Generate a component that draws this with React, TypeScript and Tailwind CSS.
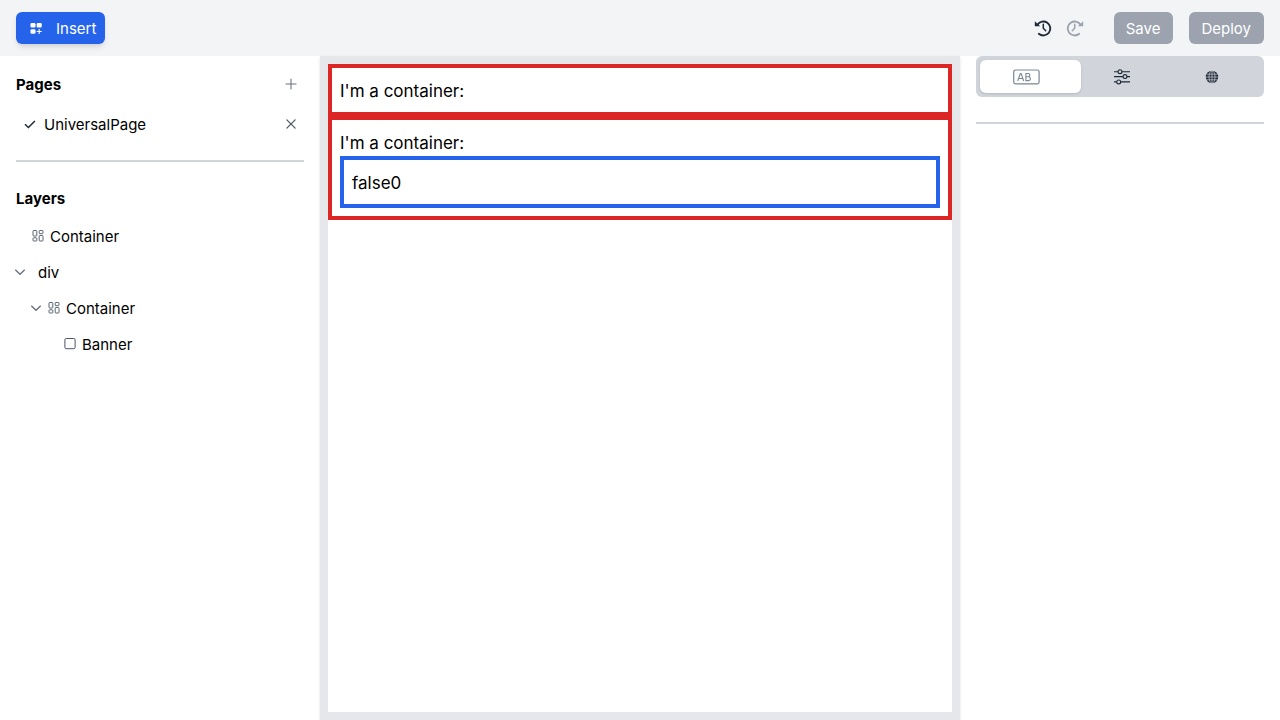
import type { ReactNode } from "react";
import { RxCross2, RxPlus } from "react-icons/rx";

function GridAddIcon() {
  return (
    <svg viewBox="0 0 16 16" className="size-4" fill="currentColor" aria-hidden="true">
      <rect x="2.500" y="3" width="5" height="4.500" rx="1.200" />
      <rect x="8.700" y="3" width="5" height="4.500" rx="1.200" />
      <rect x="2.500" y="9.200" width="5" height="4.600" rx="1.200" />
      <path d="M11.200 9v5M8.700 11.500h5" stroke="currentColor" strokeWidth="1.100" />
    </svg>
  );
}

function HistoryIcon({ flipped }: { flipped?: boolean }) {
  return (
    <svg
      viewBox="0 0 18 18"
      className={flipped ? "size-[18px] -scale-x-100" : "size-[18px]"}
      fill="none"
      stroke="currentColor"
      aria-hidden="true"
    >
      <path d="M3.400 5.700A7 7 0 1 1 4.800 14.800" strokeWidth="1.900" strokeLinecap="round" />
      <path d="M.8 2.300v5h5.400z" fill="currentColor" stroke="none" />
      <path d="M9.300 5.300v3.900l2.400 2.600" strokeWidth="1.500" strokeLinecap="round" />
    </svg>
  );
}

function DashboardIcon() {
  return (
    <svg viewBox="0 0 12 12" className="size-3" fill="none" stroke="currentColor" strokeWidth="0.900" aria-hidden="true">
      <rect x="1" y="0.500" width="3.800" height="5.500" rx="0.700" />
      <rect x="7.200" y="0.500" width="3.800" height="3.200" rx="0.700" />
      <rect x="1" y="7.800" width="3.800" height="3.200" rx="0.700" />
      <rect x="7.200" y="5.500" width="3.800" height="5.500" rx="0.700" />
    </svg>
  );
}

function BoxIcon() {
  return (
    <svg viewBox="0 0 12 12" className="size-3" fill="none" stroke="currentColor" aria-hidden="true">
      <rect x="0.900" y="0.500" width="10.200" height="10.200" rx="1.300" />
    </svg>
  );
}

function ChevronIcon() {
  return (
    <svg viewBox="0 0 16 16" className="size-4" fill="none" stroke="currentColor" strokeWidth="1.400" aria-hidden="true">
      <path d="M3.300 5.700 8 10.300l4.700-4.600" />
    </svg>
  );
}

function CheckIcon() {
  return (
    <svg viewBox="0 0 16 16" className="size-4" fill="none" stroke="currentColor" strokeWidth="1.500" aria-hidden="true">
      <path d="m3 8.200 3.400 3.300L12.900 5" />
    </svg>
  );
}

function TextFieldIcon() {
  return (
    <svg viewBox="0 0 27 16" className="h-4 w-[27px]" fill="none" stroke="currentColor" aria-hidden="true">
      <rect x="0.700" y="1" width="25.400" height="13.900" rx="1.800" strokeWidth="1.200" />
      <path d="M4.700 12 7.300 4.500h.8L10.700 12M5.600 9.500h4.200M12.900 4.500v7.100h2.600a1.900 1.900 0 0 0 0-3.800h-2.600h2.300a1.600 1.600 0 0 0 0-3.300z" strokeWidth="1.100" />
    </svg>
  );
}

function SlidersIcon() {
  return (
    <svg viewBox="0 0 16 16" className="size-4" fill="none" stroke="currentColor" strokeWidth="1.100" aria-hidden="true">
      <path d="M0 2.700h4M8 2.700h8M0 7.600h9M13 7.600h3M0 12.900h2.700M6.800 12.900H16" />
      <circle cx="6" cy="2.700" r="1.950" />
      <circle cx="11" cy="7.600" r="1.950" />
      <circle cx="4.700" cy="12.900" r="1.950" />
    </svg>
  );
}

function GlobeIcon() {
  return (
    <svg viewBox="0 0 14 14" className="size-3.5" fill="none" aria-hidden="true">
      <circle cx="7" cy="7" r="6.200" fill="currentColor" />
      <g stroke="#d1d5db" strokeWidth="0.700">
        <path d="M7 0.800v12.400M0.800 7h12.400M1.600 4.200h10.800M1.600 9.800h10.800" />
        <ellipse cx="7" cy="7" rx="3" ry="6.200" />
      </g>
    </svg>
  );
}

function Layer({
  label,
  icon,
  open,
  indent,
}: {
  label: string;
  icon?: ReactNode;
  open?: boolean;
  indent: string;
}) {
  return (
    <li className={`flex h-9 items-center ${indent}`}>
      {open && (
        <button type="button" aria-label={`Collapse ${label}`} className="mr-1 text-gray-500">
          <ChevronIcon />
        </button>
      )}
      {icon && <span className="mr-1 text-gray-600">{icon}</span>}
      <span className={icon ? "ml-0.5 pt-0.5" : "ml-1.5 pt-0.5"}>{label}</span>
    </li>
  );
}

export default function App() {
  return (
    <div className="flex min-h-screen flex-col bg-white font-['Inter',sans-serif] text-[15px] leading-6 text-black">
      <header className="flex h-14 items-center bg-[#f3f4f6] px-4">
        <button
          type="button"
          className="flex h-8 items-center gap-3 rounded-md bg-[#2563eb] pr-[9px] pl-3 text-white shadow-md"
        >
          <GridAddIcon />
          <span className="pt-0.5">Insert</span>
        </button>
        <div className="ml-auto flex items-center gap-4">
          <div className="mr-3.5 flex gap-3.5">
            <button type="button" aria-label="Undo" className="text-[#1f2937]">
              <HistoryIcon />
            </button>
            <button type="button" aria-label="Redo" disabled className="text-[#9ca3af]">
              <HistoryIcon flipped />
            </button>
          </div>
          <button type="button" className="h-8 rounded-md bg-[#9ca3af] pt-0.5 pr-[13px] pl-3 text-white">
            Save
          </button>
          <button type="button" className="h-8 rounded-md bg-[#9ca3af] pt-0.5 pr-[13px] pl-3 text-white">
            Deploy
          </button>
        </div>
      </header>

      <div className="flex flex-1">
        <aside className="w-80 shrink-0 px-4 pt-4">
          <div className="flex h-6 items-center justify-between pr-1">
            <h2 className="pt-0.5 font-bold">Pages</h2>
            <button type="button" aria-label="Add page" className="p-px text-gray-500">
              <RxPlus className="size-4" />
            </button>
          </div>
          <div className="mt-4 flex h-6 items-center pr-1 pl-1.5">
            <span className="text-gray-800">
              <CheckIcon />
            </span>
            <a href="#universal-page" className="ml-1.5 pt-0.5">
              UniversalPage
            </a>
            <button type="button" aria-label="Remove page" className="ml-auto p-px text-gray-600">
              <RxCross2 className="size-4" />
            </button>
          </div>
          <hr className="mt-6 border-t-2 border-[#d1d5db]" />
          <div className="mt-6 flex h-6 items-center">
            <h2 className="pt-0.5 font-bold">Layers</h2>
          </div>
          <ul className="-ml-3 pt-2">
            <Layer label="Container" icon={<DashboardIcon />} indent="pl-7" />
            <Layer label="div" open indent="pl-2" />
            <Layer label="Container" open icon={<DashboardIcon />} indent="pl-6" />
            <Layer label="Banner" icon={<BoxIcon />} indent="pl-15" />
          </ul>
        </aside>

        <main className="flex min-w-0 flex-1 bg-[#e5e7eb] p-2 text-[17px] shadow-sm">
          <div className="flex-1 bg-white">
            <section className="border-4 border-[#dc2626] px-2 pt-[11px] pb-[9px]">I&apos;m a container:</section>
            <section className="border-4 border-[#dc2626] px-2 pt-[11px] pb-2">
              I&apos;m a container:
              <div className="mt-px border-4 border-[#2563eb] px-2 pt-[11px] pb-[9px]">false0</div>
            </section>
          </div>
        </main>

        <aside className="w-80 shrink-0 px-4">
          <div role="tablist" className="flex rounded-md bg-[#d1d5db] p-1 text-[#1f2937]">
            <button
              type="button"
              role="tab"
              aria-selected="true"
              aria-label="Content"
              className="flex h-[33px] w-[101px] items-center justify-center rounded-md bg-white pr-2 text-[#7b8794] shadow-sm"
            >
              <TextFieldIcon />
            </button>
            <button type="button" role="tab" aria-label="Settings" className="flex w-[82px] items-center justify-center">
              <SlidersIcon />
            </button>
            <button type="button" role="tab" aria-label="Page" className="flex flex-1 items-center justify-center">
              <GlobeIcon />
            </button>
          </div>
          <hr className="mt-[25px] border-t-2 border-[#d1d5db]" />
        </aside>
      </div>
    </div>
  );
}
